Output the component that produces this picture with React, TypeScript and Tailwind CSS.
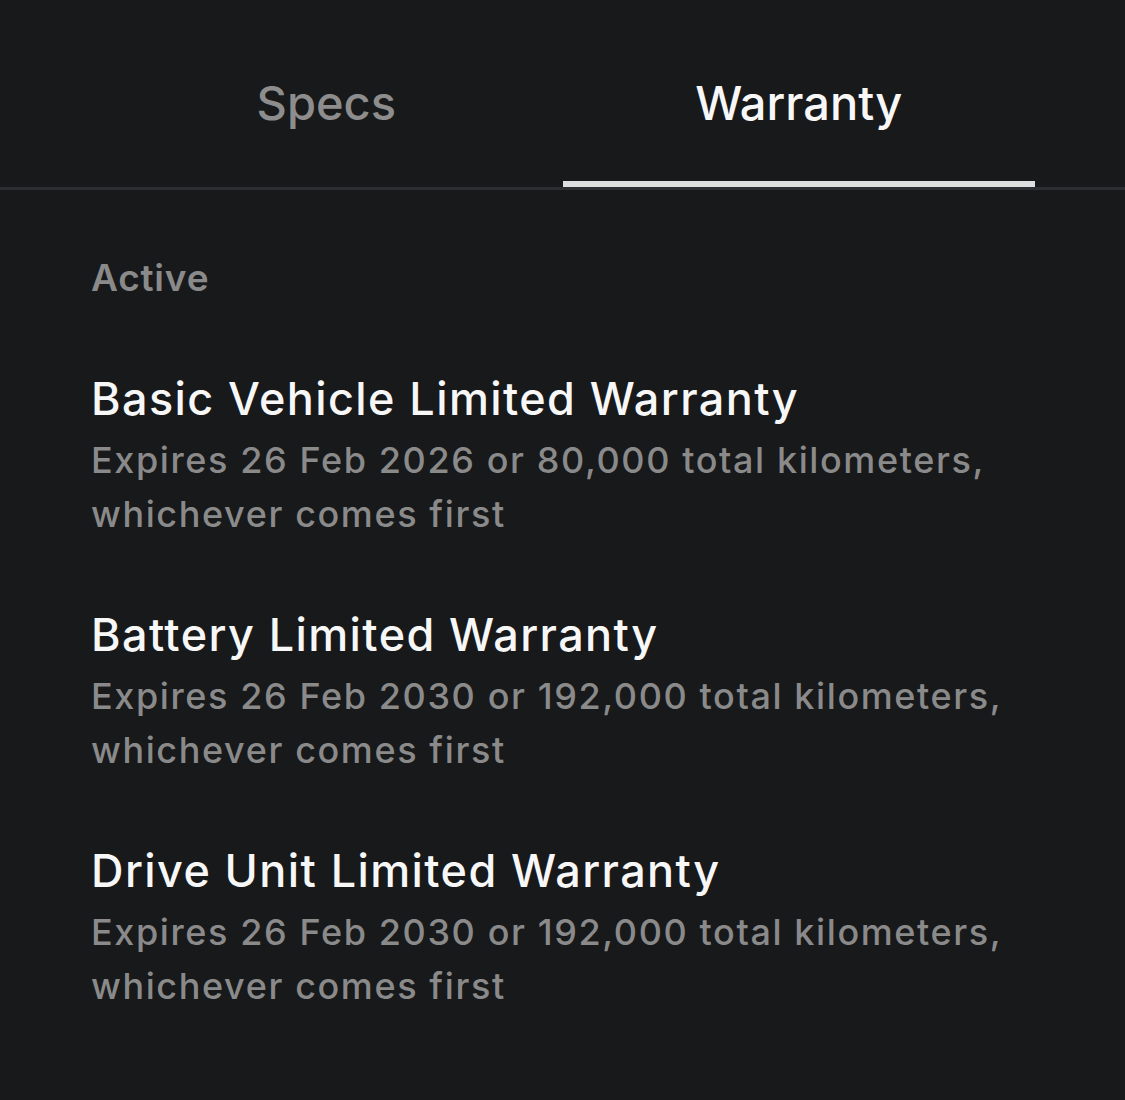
import { useState } from 'react';

const warranties = [
  {
    title: 'Basic Vehicle Limited Warranty',
    detail: 'Expires 26 Feb 2026 or 80,000 total kilometers, whichever comes first',
  },
  {
    title: 'Battery Limited Warranty',
    detail: 'Expires 26 Feb 2030 or 192,000 total kilometers, whichever comes first',
  },
  {
    title: 'Drive Unit Limited Warranty',
    detail: 'Expires 26 Feb 2030 or 192,000 total kilometers, whichever comes first',
  },
];

const App = () => {
  const [tab, setTab] = useState('warranty');

  return (
    <div
      className="min-h-[1100px] w-full bg-[#18191b] text-white"
      style={{ fontFamily: 'Inter, "Noto Sans", sans-serif' }}
    >
      {/* Tabs */}
      <div className="flex px-[90px]">
        {[
          { id: 'specs', label: 'Specs' },
          { id: 'warranty', label: 'Warranty' },
        ].map(t => (
          <button
            key={t.id}
            onClick={() => setTab(t.id)}
            className="flex h-[187px] flex-1 flex-col items-center"
          >
            <span
              className={`mt-[75px] text-[47px] leading-[56px] font-medium tracking-[0px] ${
                tab === t.id ? 'text-[#f7f7f7]' : 'text-[#8d8d8d]'
              }`}
            >
              {t.label}
            </span>
            <span className="flex-1" />
            <span className={`h-[6px] w-full ${tab === t.id ? 'bg-[#dedede]' : 'bg-transparent'}`} />
          </button>
        ))}
      </div>
      <div className="h-[3px] w-full bg-[#2d2e31]" />

      {/* Warranty list */}
      <div className="px-[91px] pt-[66px]">
        <div className="text-[37px] leading-[44px] font-semibold tracking-[0.8px] text-[#8a8a8a]">Active</div>
        <div className="mt-[74px] flex flex-col gap-[69px]">
          {warranties.map(w => (
            <div key={w.title}>
              <div className="text-[45px] leading-[50px] font-medium tracking-[1.4px] text-[#f7f7f7]">{w.title}</div>
              <div className="mt-[9px] max-w-[960px] text-[36px] leading-[54px] font-medium tracking-[1.6px] text-[#8a8a8a]">
                {w.detail}
              </div>
            </div>
          ))}
        </div>
      </div>
    </div>
  );
};

export default App;
